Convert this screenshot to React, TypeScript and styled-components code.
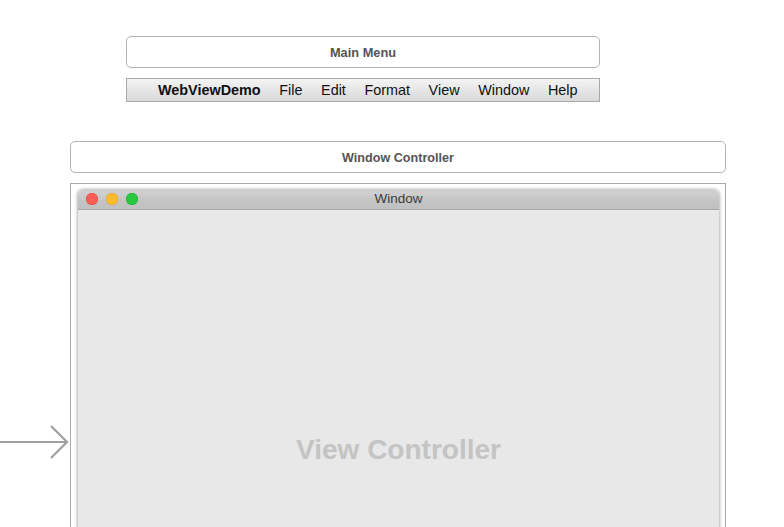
import React from "react";
import styled, { createGlobalStyle } from "styled-components";

const Global = createGlobalStyle`
  html, body { margin: 0; padding: 0; background: #ffffff; }
  body { font-family: "Liberation Sans", Arial, sans-serif; }
`;

const Canvas = styled.div`
  position: relative;
  width: 784px;
  height: 527px;
  overflow: hidden;
  background: #ffffff;
  padding-top: 36px;
  box-sizing: border-box;
`;

const MenuGroup = styled.div`
  margin-left: 126px;
  width: 474px;
  display: flex;
  flex-direction: column;
  gap: 10px;
`;

const SceneTitle = styled.div<{ $size?: number }>`
  height: 32px;
  box-sizing: border-box;
  border: 1px solid #b3b3b3;
  border-radius: 5px;
  display: flex;
  align-items: center;
  justify-content: center;
  padding-top: 1px;
  font-weight: bold;
  font-size: ${(p) => p.$size ?? 12.8}px;
  color: #555555;
  background: #ffffff;
`;

const MenuBar = styled.div`
  height: 24px;
  box-sizing: border-box;
  border: 1px solid #a9a9a9;
  background: linear-gradient(#f4f4f4, #e6e6e6 50%, #d9d9d9);
  display: flex;
  align-items: center;
  padding-left: 31px;
  gap: 18.6px;
  font-size: 14.4px;
  color: #111111;
`;

const MenuItem = styled.span<{ $bold?: boolean }>`
  font-weight: ${(p) => (p.$bold ? "bold" : "normal")};
`;

const ControllerGroup = styled.div`
  margin-left: 70px;
  margin-top: 39px;
  width: 656px;
  display: flex;
  flex-direction: column;
  gap: 10px;
`;

const Scene = styled.div`
  height: 400px;
  box-sizing: border-box;
  border: 1px solid #aaaaaa;
  border-bottom: none;
  padding: 6px 6px 0 7px;
`;

const Window = styled.div`
  display: flex;
  flex-direction: column;
  border-radius: 5px 5px 0 0;
  box-shadow: 0 0 3px 1px rgba(0, 0, 0, 0.3);
  overflow: hidden;
`;

const TitleBar = styled.div`
  position: relative;
  height: 20px;
  box-sizing: border-box;
  background: linear-gradient(#d2d2d2, #c4c4c4 60%, #c0c0c0);
  border-bottom: 1px solid #a8a8a8;
  display: flex;
  align-items: center;
  justify-content: center;
  padding-bottom: 2px;
  font-size: 13.5px;
  color: #3a3a3a;
`;

const Lights = styled.div`
  position: absolute;
  left: 8px;
  top: 3px;
  display: flex;
  gap: 8px;
`;

const Light = styled.span<{ $color: string; $edge: string }>`
  width: 12px;
  height: 12px;
  border-radius: 50%;
  background: ${(p) => p.$color};
  box-shadow: inset 0 0 0 0.5px ${(p) => p.$edge};
`;

const Content = styled.div`
  height: 480px;
  background: #e8e8e8;
  display: flex;
  align-items: center;
  justify-content: center;
  font-weight: bold;
  font-size: 28px;
  color: #c4c4c4;
`;

const Arrow = styled.svg`
  position: absolute;
  left: 0;
  top: 425px;
`;

export default function App() {
  return (
    <>
      <Global />
      <Canvas>
        <MenuGroup>
          <SceneTitle>Main Menu</SceneTitle>
          <MenuBar>
            <MenuItem $bold>WebViewDemo</MenuItem>
            <MenuItem>File</MenuItem>
            <MenuItem>Edit</MenuItem>
            <MenuItem>Format</MenuItem>
            <MenuItem>View</MenuItem>
            <MenuItem>Window</MenuItem>
            <MenuItem>Help</MenuItem>
          </MenuBar>
        </MenuGroup>
        <ControllerGroup>
          <SceneTitle $size={12.6}>Window Controller</SceneTitle>
          <Scene>
            <Window>
              <TitleBar>
                <Lights>
                  <Light $color="#fc5f57" $edge="#e0443e" />
                  <Light $color="#fdbc2e" $edge="#dea123" />
                  <Light $color="#28c840" $edge="#1aab29" />
                </Lights>
                Window
              </TitleBar>
              <Content>View Controller</Content>
            </Window>
          </Scene>
        </ControllerGroup>
        <Arrow width="72" height="36" viewBox="0 0 72 36">
          <line x1="0" y1="17" x2="67" y2="17" stroke="#a0a0a0" strokeWidth="2.2" />
          <polyline
            points="51,1 67,17 51,33"
            fill="none"
            stroke="#a0a0a0"
            strokeWidth="2.2"
          />
        </Arrow>
      </Canvas>
    </>
  );
}
